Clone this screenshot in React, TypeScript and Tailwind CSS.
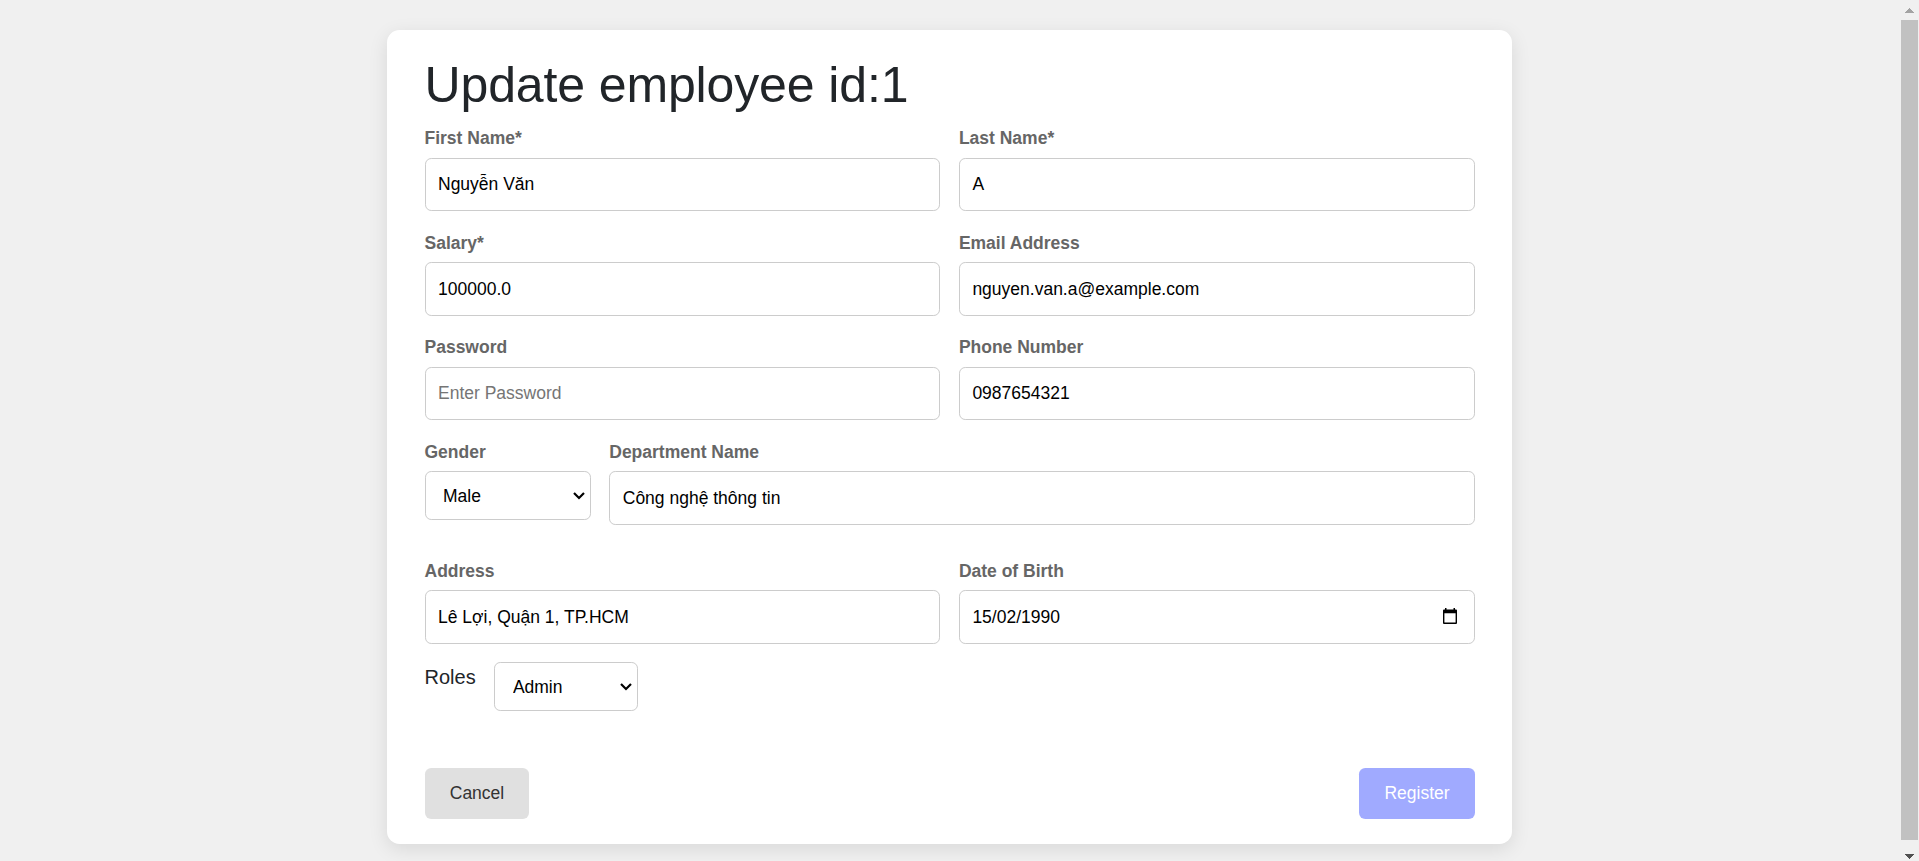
import type { ReactNode } from 'react';

function Chevron() {
  return (
    <svg
      className="pointer-events-none absolute top-1/2 right-[6px] -mt-[3px] h-[8px] w-[12px]"
      viewBox="0 0 12 8"
      fill="none"
      stroke="#000"
      strokeWidth="2.2"
    >
      <path d="M1 1 6 6 11 1" />
    </svg>
  );
}

function Field({ label, className, children }: { label: string; className: string; children: ReactNode }) {
  return (
    <div className={className}>
      <label className="mb-[6.25px] block text-[17.5px] leading-[26.25px] font-bold text-[#666]">{label}</label>
      {children}
    </div>
  );
}

function TextInput({ value, placeholder, tall }: { value?: string; placeholder?: string; tall?: boolean }) {
  return (
    <input
      type="text"
      defaultValue={value}
      placeholder={placeholder}
      className={`block w-full rounded-[6.25px] border border-[#ccc] bg-white px-[12.5px] text-[17.5px] text-black outline-none placeholder:text-[#757575] ${
        tall ? 'h-[54px] pt-[1px]' : 'h-[53.25px]'
      }`}
    />
  );
}

function Select({ value, options, className }: { value: string; options: string[]; className: string }) {
  return (
    <div className={className}>
      <select
        defaultValue={value}
        className="block h-[48.75px] w-full appearance-none rounded-[6.25px] border border-[#ccc] bg-white px-[17.5px] pt-[2px] text-[17.5px] text-black outline-none"
      >
        {options.map((o) => (
          <option key={o}>{o}</option>
        ))}
      </select>
      <Chevron />
    </div>
  );
}

function CalendarIcon() {
  return (
    <svg className="absolute top-[18px] right-[17.5px] h-[16px] w-[14px]" viewBox="0 0 14 16">
      <path d="M2 0h1.5v1.4h7V0H12v1.4h1a1 1 0 0 1 1 1V15a1 1 0 0 1-1 1H1a1 1 0 0 1-1-1V2.400a1 1 0 0 1 1-1h1zM1.400 5.200v9.300h11.200V5.200z" fill="#000" />
    </svg>
  );
}

const half = 'min-w-0 flex-1';

export default function App() {
  return (
    <div className="flex h-[861px] overflow-hidden bg-[#f0f0f0] font-['Liberation_Sans',Arial,sans-serif] text-[#212529]">
      <main className="flex flex-1 items-start justify-center pt-[30px]">
        <form className="h-[814px] w-[1125px] rounded-[12.5px] bg-white px-[37.5px] py-[25px] shadow-[0_5px_18.75px_rgba(0,0,0,0.1)]">
          <h1 className="mb-[10px] text-[50px] leading-[60px] tracking-[-0.13px]">Update employee id:1</h1>

          <div className="mb-[18.75px] flex gap-[18.75px]">
            <Field label="First Name*" className={half}><TextInput value="Nguyễn Văn" /></Field>
            <Field label="Last Name*" className={half}><TextInput value="A" /></Field>
          </div>
          <div className="mb-[18px] flex gap-[18.75px]">
            <Field label="Salary*" className={half}><TextInput tall value="100000.0" /></Field>
            <Field label="Email Address" className={half}><TextInput tall value="nguyen.van.a@example.com" /></Field>
          </div>
          <div className="mb-[18.75px] flex gap-[18.75px]">
            <Field label="Password" className={half}><TextInput placeholder="Enter Password" /></Field>
            <Field label="Phone Number" className={half}><TextInput value="0987654321" /></Field>
          </div>
          <div className="mb-[32.75px] flex gap-[18.75px]">
            <Field label="Gender" className="w-[166px]">
              <Select value="Male" options={['Male', 'Female']} className="relative" />
            </Field>
            <Field label="Department Name" className={half}><TextInput tall value="Công nghệ thông tin" /></Field>
          </div>
          <div className="mb-[17.5px] flex gap-[18.75px]">
            <Field label="Address" className={half}><TextInput tall value="Lê Lợi, Quận 1, TP.HCM" /></Field>
            <Field label="Date of Birth" className={half}>
              <div className="relative">
                <TextInput tall value="15/02/1990" />
                <CalendarIcon />
              </div>
            </Field>
          </div>

          <div className="mb-[57px] flex gap-[18.75px]">
            <label className="text-[20px] leading-[30px]">Roles</label>
            <Select value="Admin" options={['Admin', 'Employee']} className="relative w-[143.5px]" />
          </div>

          <div className="flex justify-between">
            <button type="button" className="h-[51px] w-[104px] rounded-[6.25px] bg-[#e0e0e0] pl-[1px] text-[17.5px] text-[#333]">Cancel</button>
            <button type="button" className="h-[51px] w-[116px] rounded-[6.25px] bg-[#a0aaff] pl-[1px] text-[17.5px] text-white">Register</button>
          </div>
        </form>
      </main>
      <aside className="flex w-[20px] flex-col items-center bg-[#f0f0f0] pr-[1px] pl-[2px]">
        <svg className="h-[20px] w-[17px]" viewBox="0 0 17 20" shapeRendering="crispEdges">
          <path d="M8.5 8 13.5 13h-10z" fill="#a3a3a3" />
        </svg>
        <div className="h-[820px] w-[17px] bg-[#c1c1c1]" />
        <svg className="h-[21px] w-[17px]" viewBox="0 0 17 21" shapeRendering="crispEdges">
          <path d="M8.5 19 13.5 14h-10z" fill="#505050" />
        </svg>
      </aside>
    </div>
  );
}
